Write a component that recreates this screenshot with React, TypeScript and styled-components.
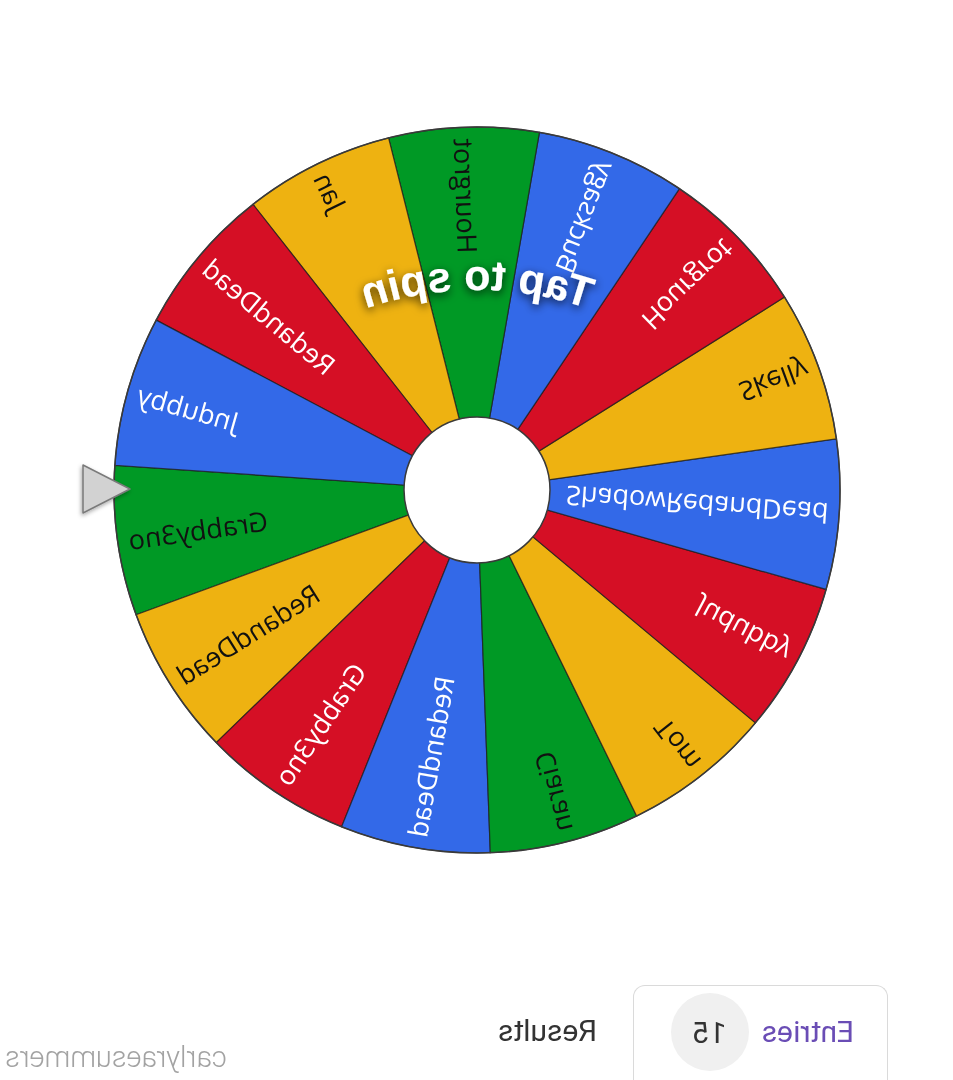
import React from "react";
import styled, { createGlobalStyle } from "styled-components";

const GlobalStyle = createGlobalStyle`
  html, body { margin: 0; padding: 0; background: #ffffff; }
  body { font-family: Roboto, "Noto Sans", Arial, sans-serif; }
`;

const COLORS: Record<string, string> = {
  green: "#009925",
  yellow: "#eeb211",
  red: "#d50f25",
  blue: "#3369e8",
};

const SEGMENTS: { color: keyof typeof COLORS | string; name: string }[] = [
  { color: "green", name: "Grabby3no" },
  { color: "yellow", name: "RedandDead" },
  { color: "red", name: "Grabby3no" },
  { color: "blue", name: "RedandDead" },
  { color: "green", name: "Ciaran" },
  { color: "yellow", name: "Tom" },
  { color: "red", name: "Judubby" },
  { color: "blue", name: "ShadowRedandDead" },
  { color: "yellow", name: "Skelly" },
  { color: "red", name: "Hourgrot" },
  { color: "blue", name: "Bucksagy" },
  { color: "green", name: "Hourgrot" },
  { color: "yellow", name: "Jan" },
  { color: "red", name: "RedandDead" },
  { color: "blue", name: "Jndubby" },
];

const CX = 476;
const CY = 490;
const R = 363;
const HUB = 73;
const START = -3.9;
const STEP = 360 / SEGMENTS.length;

const rad = (d: number) => (d * Math.PI) / 180;
const pt = (a: number, r: number) => [CX + r * Math.cos(rad(a)), CY + r * Math.sin(rad(a))];

const Page = styled.div`
  width: 953px;
  height: 1080px;
  overflow: hidden;
  display: flex;
  flex-direction: column;
  background: #ffffff;
  transform: scaleX(-1);
`;

const Stage = styled.div`
  height: 985px;
  display: flex;
  justify-content: center;
`;

const WheelSvg = styled.svg`
  display: block;
  width: 953px;
  height: 985px;
`;

const SliceLabel = styled.text<{ $dark: boolean }>`
  font-family: "Open Sans", "Noto Sans", sans-serif;
  font-size: 27px;
  font-weight: 400;
  fill: ${(p) => (p.$dark ? "#111111" : "#ffffff")};
`;

const SpinText = styled.text`
  font-family: "Liberation Sans", Arial, sans-serif;
  font-size: 43px;
  font-weight: 700;
  fill: #ffffff;
`;

const TabBar = styled.div`
  display: flex;
  align-items: flex-start;
  height: 95px;
`;

const ActiveTab = styled.div`
  box-sizing: border-box;
  margin-left: 65px;
  width: 255px;
  height: 110px;
  padding: 7px 0 0 33px;
  border: 1.5px solid #dadada;
  border-bottom: none;
  border-radius: 12px 12px 0 0;
  display: flex;
  align-items: flex-start;
  gap: 13px;
`;

const TabLabel = styled.span<{ $active?: boolean }>`
  font-family: Roboto, "Noto Sans", sans-serif;
  font-size: 30px;
  line-height: 78px;
  color: ${(p) => (p.$active ? "#6a4db5" : "#333333")};
`;

const Badge = styled.span`
  width: 78px;
  height: 78px;
  border-radius: 50%;
  background: #f0f0f0;
  display: flex;
  align-items: center;
  justify-content: center;
  font-family: Roboto, "Noto Sans", sans-serif;
  font-size: 30px;
  color: #333333;
`;

const ResultsTab = styled.div`
  margin-left: 36px;
  margin-top: 7px;
`;

const Watermark = styled.div`
  margin-left: auto;
  margin-right: 5px;
  margin-top: 56px;
  font-family: Roboto, "Noto Sans", sans-serif;
  font-weight: 300;
  font-size: 29px;
  line-height: 32px;
  color: #a3a3a3;
`;

function Wheel() {
  return (
    <WheelSvg viewBox="0 0 953 985">
      <defs>
        <filter id="spinShadow" x="-20%" y="-50%" width="140%" height="200%">
          <feDropShadow dx="0" dy="3" stdDeviation="5" floodColor="#000" floodOpacity="0.75" />
        </filter>
        <filter id="ptrShadow" x="-50%" y="-50%" width="200%" height="200%">
          <feDropShadow dx="1" dy="2" stdDeviation="2" floodColor="#000" floodOpacity="0.35" />
        </filter>
        <path id="spinArc" d={`M ${CX - 340} 630 A 340 340 0 0 1 ${CX + 340} 630`} />
      </defs>

      {SEGMENTS.map((s, i) => {
        const a0 = START + i * STEP;
        const a1 = a0 + STEP;
        const [x0, y0] = pt(a0, R);
        const [x1, y1] = pt(a1, R);
        return (
          <path
            key={`s${i}`}
            d={`M ${CX} ${CY} L ${x0} ${y0} A ${R} ${R} 0 0 1 ${x1} ${y1} Z`}
            fill={COLORS[s.color]}
            stroke="rgba(30,30,30,0.75)"
            strokeWidth={1.2}
          />
        );
      })}

      {SEGMENTS.map((s, i) => {
        const mid = START + i * STEP + STEP / 2;
        const dark = s.color === "green" || s.color === "yellow";
        return (
          <SliceLabel
            key={`t${i}`}
            $dark={dark}
            transform={`translate(${CX} ${CY}) rotate(${mid})`}
            x={352}
            y={0}
            textAnchor="end"
            dominantBaseline="central"
          >
            {s.name}
          </SliceLabel>
        );
      })}

      <circle cx={CX} cy={CY} r={R} fill="none" stroke="#3a3a3a" strokeWidth={1.5} />
      <circle cx={CX} cy={CY} r={HUB} fill="#ffffff" stroke="#3a3a3a" strokeWidth={1.5} />

      <polygon
        points="823,489 870,465 870,513"
        fill="#d2d2d2"
        stroke="#7a7a7a"
        strokeWidth={1.5}
        strokeLinejoin="round"
        filter="url(#ptrShadow)"
      />

      <SpinText filter="url(#spinShadow)">
        <textPath href="#spinArc" startOffset="50%" textAnchor="middle">
          Tap to spin
        </textPath>
      </SpinText>
    </WheelSvg>
  );
}

export default function App() {
  return (
    <>
      <GlobalStyle />
      <Page>
        <Stage>
          <Wheel />
        </Stage>
        <TabBar>
          <ActiveTab>
            <TabLabel $active>Entries</TabLabel>
            <Badge>15</Badge>
          </ActiveTab>
          <ResultsTab>
            <TabLabel>Results</TabLabel>
          </ResultsTab>
          <Watermark>carlyraesummers</Watermark>
        </TabBar>
      </Page>
    </>
  );
}
